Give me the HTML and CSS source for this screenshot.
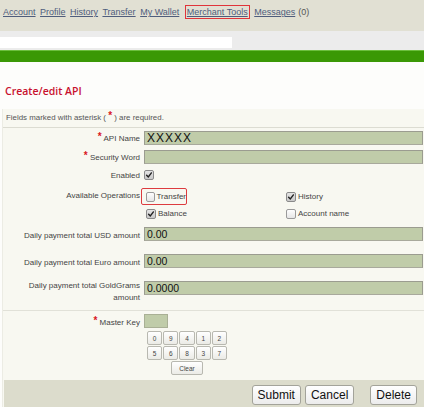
FILE: index.html
```html
<!DOCTYPE html>
<html>
<head>
<meta charset="utf-8">
<link rel="stylesheet" href="styles.css">
</head>
<body>
<div class="topnav">
  <a href="#">Account</a>
  <a href="#">Profile</a>
  <a href="#">History</a>
  <a href="#">Transfer</a>
  <a href="#">My Wallet</a>
  <a href="#" class="hl">Merchant Tools</a>
  <a href="#">Messages</a><span class="count">(0)</span>
</div>
<div class="strip"><div class="strip-box"></div></div>
<div class="greenbar"></div>

<h1 class="title">Create/edit API</h1>

<div class="panel">
  <div class="note">Fields marked with asterisk ( <span class="req">*</span> ) are required.</div>

  <div class="row r-api">
    <div class="label"><span class="req">*</span> API Name</div>
    <div class="field"><input class="txt wide" value="XXXXX"></div>
  </div>
  <div class="row r-sec">
    <div class="label"><span class="req">*</span> Security Word</div>
    <div class="field"><input class="txt" value=""></div>
  </div>
  <div class="row r-en">
    <div class="label">Enabled</div>
    <div class="field"><span class="cb on"><svg viewBox="0 0 10 10"><path d="M2 5.2 L4.2 7.4 L8 2.4" /></svg></span></div>
  </div>
  <div class="row r-ops">
    <div class="label">Available Operations</div>
    <div class="ops">
      <label class="op boxed"><span class="cb"></span>Transfer</label>
      <label class="op"><span class="cb on"><svg viewBox="0 0 10 10"><path d="M2 5.2 L4.2 7.4 L8 2.4" /></svg></span>History</label>
      <label class="op"><span class="cb on"><svg viewBox="0 0 10 10"><path d="M2 5.2 L4.2 7.4 L8 2.4" /></svg></span>Balance</label>
      <label class="op"><span class="cb"></span>Account name</label>
    </div>
  </div>
  <div class="row r-amt">
    <div class="label">Daily payment total USD amount</div>
    <div class="field"><input class="txt" value="0.00"></div>
  </div>
  <div class="row r-amt">
    <div class="label">Daily payment total Euro amount</div>
    <div class="field"><input class="txt" value="0.00"></div>
  </div>
  <div class="row r-gold">
    <div class="label">Daily payment total GoldGrams amount</div>
    <div class="field"><input class="txt" value="0.0000"></div>
  </div>

  <div class="row r-key">
    <div class="label"><span class="req">*</span> Master Key</div>
    <div class="field">
      <input class="key">
      <div class="pad">
        <div class="pad-row"><button>0</button><button>9</button><button>4</button><button>1</button><button>2</button></div>
        <div class="pad-row"><button>5</button><button>6</button><button>8</button><button>3</button><button>7</button></div>
        <div class="pad-clear"><button class="clear">Clear</button></div>
      </div>
    </div>
  </div>

  <div class="actions">
    <button class="btn">Submit</button>
    <button class="btn">Cancel</button>
    <button class="btn del">Delete</button>
  </div>
</div>
</body>
</html>
```

FILE: styles.css
```css
html, body {
  margin: 0;
  padding: 0;
  background: #fdfdfb;
  font-family: "Liberation Sans", Arial, sans-serif;
  color: #444;
}

.topnav {
  background: #e1e0d3;
  height: 31px;
  padding: 6px 0 0 3px;
  box-sizing: border-box;
  font-size: 9px;
  line-height: 12px;
  white-space: nowrap;
}
.topnav a {
  color: #4f5d7c;
  text-decoration: underline;
  margin-right: 2px;
}
.topnav a.hl {
  border: 1px solid #e0343a;
  padding: 1px 1px;
  margin-left: 1px;
}
.topnav .count {
  color: #555;
  margin-left: 1px;
}

.strip {
  background: #ececec;
  height: 19px;
  padding-top: 6px;
  box-sizing: border-box;
}
.strip-box {
  width: 232px;
  height: 11px;
  background: #fff;
}

.greenbar {
  height: 12px;
  background: #3a9805;
  border-top: 1px solid #6cbf3e;
  box-sizing: border-box;
}

.title {
  margin: 21px 0 0 5px;
  font-family: "Open Sans", "DejaVu Sans", sans-serif;
  font-weight: 600;
  font-size: 10.5px;
  line-height: 16px;
  color: #c8102e;
}

.panel {
  margin: 10px 0 0 2px;
  background: #f8f8f1;
  border-left: 1px solid #ecece4;
}

.note {
  font-size: 7.9px;
  color: #555;
  padding: 4px 0 4px 3px;
  line-height: 10px;
  border-bottom: 1px solid #dcdcd2;
}
.req {
  color: #d8161e;
  font-weight: bold;
  font-size: 10px;
  vertical-align: 1px;
  line-height: 0;
}

.row {
  display: flex;
  align-items: flex-start;
}
.label {
  width: 137px;
  flex: none;
  text-align: right;
  padding-right: 4px;
  font-size: 8px;
  line-height: 12px;
  color: #444;
}
.field {
  flex: 1;
  min-width: 0;
  font-size: 8px;
  line-height: 12px;
}

.txt {
  display: block;
  box-sizing: border-box;
  width: 279px;
  height: 14px;
  margin: 0;
  padding: 0 0 0 2px;
  border: 1px solid #9b9c90;
  border-bottom-color: #a8a99c;
  background: #c0cca9;
  font-family: "Liberation Sans", Arial, sans-serif;
  font-size: 10.5px;
  color: #111;
  outline: none;
}
.txt.wide {
  font-size: 12px;
  letter-spacing: 1px;
}

.r-api { margin-top: 3px; }
.r-api .label, .r-sec .label { padding-top: 2px; }
.r-sec { margin-top: 5px; }
.r-en { margin-top: 6px; }

.cb {
  display: inline-block;
  box-sizing: border-box;
  width: 10px;
  height: 10px;
  border: 1px solid #9a9a9a;
  border-radius: 2px;
  background: linear-gradient(#fdfdfd, #e6e6e6);
  vertical-align: -2px;
  margin-right: 1px;
}
.cb.on {
  background: linear-gradient(#e4e4e4, #c9c9c9);
  border-color: #8a8a8a;
}
.cb svg {
  display: block;
  width: 8px;
  height: 8px;
}
.cb svg path {
  fill: none;
  stroke: #222;
  stroke-width: 1.8;
  stroke-linecap: round;
  stroke-linejoin: round;
}

.r-ops { margin-top: 6px; }
.r-ops .label { padding-top: 2px; }
.ops {
  display: grid;
  grid-template-columns: 140px 1fr;
  font-size: 8px;
  color: #444;
  line-height: 17px;
}
.op {
  display: flex;
  align-items: center;
  gap: 1px;
  height: 17px;
  padding-left: 2px;
}
.op.boxed {
  box-sizing: border-box;
  margin-left: -3px;
  padding-left: 4px;
  width: 46px;
  height: 17px;
  border: 1px solid #dd3b3f;
  border-radius: 2px;
}

.r-amt { margin-top: 5px; }
.r-amt .label { padding-top: 3px; }
.r-amt + .r-amt { margin-top: 12px; }
.r-gold { margin-top: 12px; padding-bottom: 6px; border-bottom: 1px solid #e1e1d8; }
.r-gold .label { margin-top: -1px; }

.r-key { margin-top: 3px; }
.r-key .label { padding-top: 3px; }
.key {
  display: block;
  box-sizing: border-box;
  width: 24px;
  height: 14px;
  margin: 0;
  padding: 0;
  border: 1px solid #a9b095;
  background: #c0cca9;
  outline: none;
}
.pad {
  margin: 3px 0 0 3px;
  width: 80px;
}
.pad-row {
  display: flex;
  gap: 1px;
  margin-bottom: 1px;
}
.pad button {
  box-sizing: border-box;
  width: 16px;
  height: 14px;
  margin: 0;
  padding: 0;
  border: 1px solid #b8b8b0;
  border-radius: 2px;
  background: linear-gradient(#ffffff, #ebebe6);
  font-family: "Liberation Sans", Arial, sans-serif;
  font-size: 6.5px;
  color: #444;
}
.pad-clear {
  display: flex;
  justify-content: center;
  margin-top: 1px;
}
.pad button.clear {
  width: 32px;
  height: 14px;
}

.actions {
  margin-top: 5px;
  background: #dcdccc;
  height: 28px;
  display: flex;
  justify-content: flex-end;
  align-items: center;
  padding: 1px 7px 0 0;
  box-sizing: border-box;
  margin-left: 1px;
}
.btn {
  box-sizing: border-box;
  height: 20px;
  margin: 0 0 0 4px;
  padding: 0 5px;
  border: 1px solid #a3a39a;
  border-radius: 3px;
  background: linear-gradient(#ffffff, #ececec);
  font-family: "Liberation Sans", Arial, sans-serif;
  font-size: 12px;
  color: #111;
}
.btn.del { margin-left: 16px; }
```
